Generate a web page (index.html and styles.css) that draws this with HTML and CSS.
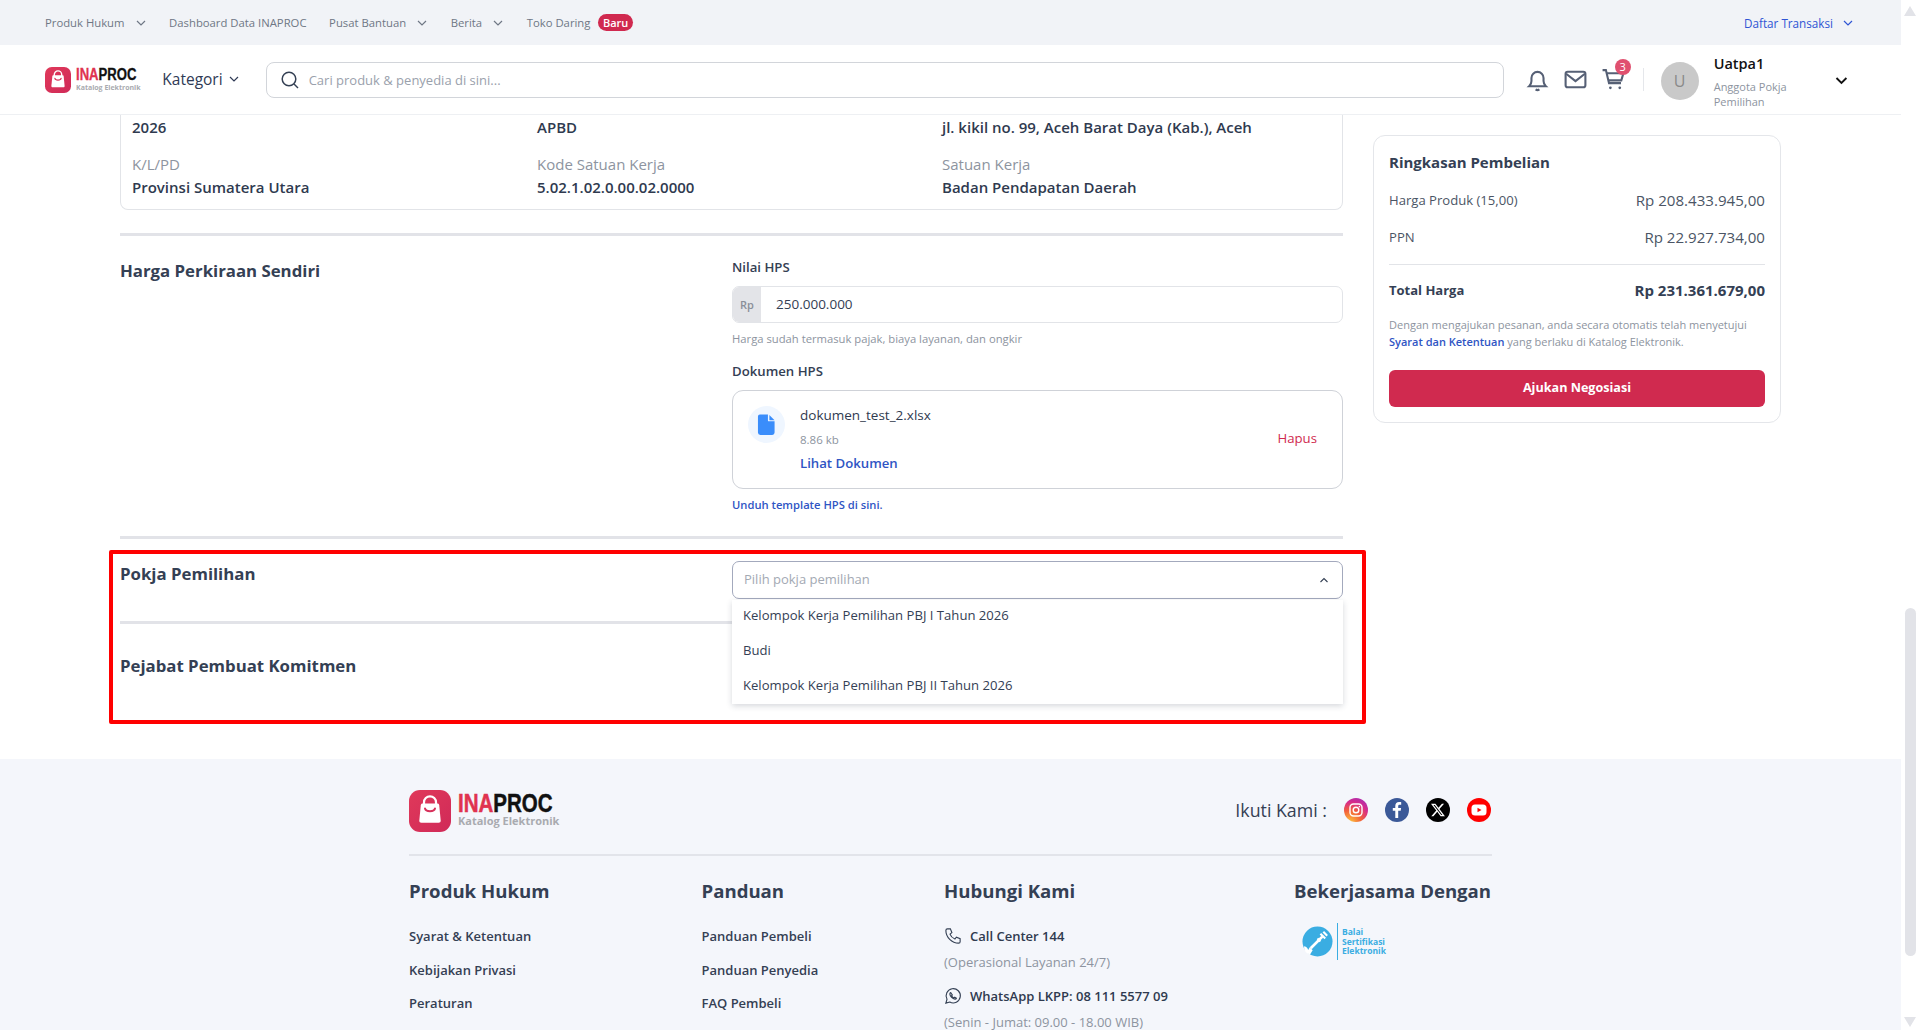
FILE: index.html
```html
<!DOCTYPE html>
<html lang="id">
<head>
    <meta charset="UTF-8">
    <title>Katalog Elektronik</title>
    <link rel="stylesheet" href="styles.css">
</head>
<body>
<svg class="defs" width="0" height="0">
    <defs>
        <linearGradient id="bagBg" x1="0" y1="0" x2="1" y2="1">
            <stop offset="0" stop-color="#e0395a"/>
            <stop offset="1" stop-color="#d02a58"/>
        </linearGradient>
        <radialGradient id="igBg" cx="0.25" cy="1" r="1.2">
            <stop offset="0" stop-color="#fdc13c"/>
            <stop offset="0.4" stop-color="#f2613a"/>
            <stop offset="0.7" stop-color="#d62a8c"/>
            <stop offset="1" stop-color="#9a2fc0"/>
        </radialGradient>
        <symbol id="bag" viewBox="0 0 42 42">
            <rect width="42" height="42" rx="11" fill="url(#bagBg)"/>
            <path d="M15 14.5v-2.2a6 6 0 0 1 12 0v2.2" fill="none" stroke="#fff" stroke-width="2.2"/>
            <path d="M13.6 13.5h14.8c1 0 1.700.7 1.800 1.700l1.500 15.300c.1 1.300-.8 2.300-2 2.300H12.300c-1.200 0-2.100-1-2-2.300l1.500-15.300c.1-1 .8-1.700 1.800-1.700z" fill="#fff"/>
            <path d="M16 18.500c.8 3.600 9.200 3.600 10 0" fill="none" stroke="#d8305a" stroke-width="2" stroke-linecap="round"/>
        </symbol>
    </defs>
</svg>

<div class="window">
    <div class="page">
        <div class="topbar">
            <nav class="topbar-links">
                <a class="top-link has-caret">Produk Hukum <svg class="caret" viewBox="0 0 12 12"><path d="M2 4l4 4 4-4"/></svg></a>
                <a class="top-link">Dashboard Data INAPROC</a>
                <a class="top-link has-caret">Pusat Bantuan <svg class="caret" viewBox="0 0 12 12"><path d="M2 4l4 4 4-4"/></svg></a>
                <a class="top-link has-caret">Berita <svg class="caret" viewBox="0 0 12 12"><path d="M2 4l4 4 4-4"/></svg></a>
                <a class="top-link">Toko Daring <span class="badge-new">Baru</span></a>
            </nav>
            <a class="top-link transaksi">Daftar Transaksi <svg class="caret" viewBox="0 0 12 12"><path d="M2 4l4 4 4-4"/></svg></a>
        </div>

        <header class="header">
            <div class="logo logo-small">
                <svg class="logo-icon"><use href="#bag"/></svg>
                <div class="logo-text">
                    <div class="logo-name"><span class="logo-red">INA</span>PROC</div>
                    <div class="logo-sub">Katalog Elektronik</div>
                </div>
            </div>
            <button class="kategori">Kategori <svg class="caret" viewBox="0 0 12 12"><path d="M2 4l4 4 4-4"/></svg></button>
            <div class="search">
                <svg class="search-icon" viewBox="0 0 20 20"><circle cx="9" cy="9" r="6.800"/><path d="M14 14L18 18"/></svg>
                <span>Cari produk &amp; penyedia di sini...</span>
            </div>
            <div class="header-icons">
                <svg class="h-icon" viewBox="0 0 24 24"><path d="M4 18.500h16c-1.400-1.300-2.200-2.800-2.200-5v-3a5.800 5.800 0 0 0-11.600 0v3c0 2.200-.8 3.700-2.200 5z"/><path d="M10.200 21.500c.9.700 2.700.7 3.600 0"/></svg>
                <svg class="h-icon" viewBox="0 0 24 24"><rect x="2.500" y="4.500" width="19" height="15" rx="2"/><path d="M3 6.500l9 7 9-7"/></svg>
                <div class="cart">
                    <svg class="h-icon" viewBox="0 0 24 24"><path d="M1.500 3h3.200l3 12.500h11.500"/><path d="M5.400 6h16.100l-2 6.800H7"/><circle cx="9" cy="20" r="1.300" class="dot"/><circle cx="18" cy="20" r="1.300" class="dot"/></svg>
                    <span class="cart-count">3</span>
                </div>
            </div>
            <div class="header-sep"></div>
            <div class="avatar">U</div>
            <div class="user">
                <div class="user-name">Uatpa1</div>
                <div class="user-role">Anggota Pokja Pemilihan</div>
            </div>
            <svg class="user-caret" viewBox="0 0 12 12"><path d="M2 4l4 4 4-4"/></svg>
        </header>

        <main class="content">
            <div class="form-col">
                <div class="info-card">
                    <div class="info-value first">2026</div>
                    <div class="info-value first">APBD</div>
                    <div class="info-value first">jl. kikil no. 99, Aceh Barat Daya (Kab.), Aceh</div>
                    <div class="info-cell">
                        <div class="info-label">K/L/PD</div>
                        <div class="info-value">Provinsi Sumatera Utara</div>
                    </div>
                    <div class="info-cell">
                        <div class="info-label">Kode Satuan Kerja</div>
                        <div class="info-value">5.02.1.02.0.00.02.0000</div>
                    </div>
                    <div class="info-cell">
                        <div class="info-label">Satuan Kerja</div>
                        <div class="info-value">Badan Pendapatan Daerah</div>
                    </div>
                </div>

                <div class="section-line first-line"></div>

                <section class="form-section hps">
                    <h2 class="section-title">Harga Perkiraan Sendiri</h2>
                    <div class="field">
                        <div class="field-label">Nilai HPS</div>
                        <div class="money-input">
                            <span class="money-addon">Rp</span>
                            <span class="money-value">250.000.000</span>
                        </div>
                        <div class="field-help">Harga sudah termasuk pajak, biaya layanan, dan ongkir</div>
                        <div class="field-label doc-label">Dokumen HPS</div>
                        <div class="file-box">
                            <div class="file-icon">
                                <svg viewBox="0 0 20 24" width="19" height="23"><path d="M3 1.500h8.500v6.200c0 .6.400 1 1 1H18.500V20.500a2.500 2.500 0 0 1-2.500 2.500H3.500A2.500 2.500 0 0 1 1 20.500V3.500a2 2 0 0 1 2-2z" fill="#3a8dfb"/><path d="M13 2l5.500 5.500H13z" fill="#3a8dfb"/></svg>
                            </div>
                            <div class="file-info">
                                <div class="file-name">dokumen_test_2.xlsx</div>
                                <div class="file-size">8.86 kb</div>
                                <a class="file-view">Lihat Dokumen</a>
                            </div>
                            <a class="file-remove">Hapus</a>
                        </div>
                        <a class="template-link">Unduh template HPS di sini.</a>
                    </div>
                </section>

                <div class="section-line"></div>

                <section class="form-section pokja">
                    <h2 class="section-title">Pokja Pemilihan</h2>
                    <div class="select-wrap">
                        <div class="select-box">
                            <span>Pilih pokja pemilihan</span>
                            <svg class="select-caret" viewBox="0 0 12 12"><path d="M2.500 8l3.500-3.500 3.500 3.500"/></svg>
                        </div>
                        <ul class="select-menu">
                            <li>Kelompok Kerja Pemilihan PBJ I Tahun 2026</li>
                            <li>Budi</li>
                            <li>Kelompok Kerja Pemilihan PBJ II Tahun 2026</li>
                        </ul>
                    </div>
                </section>

                <div class="section-line"></div>

                <section class="form-section ppk">
                    <h2 class="section-title">Pejabat Pembuat Komitmen</h2>
                </section>
            </div>

            <aside class="summary">
                <h3 class="summary-title">Ringkasan Pembelian</h3>
                <div class="summary-row row-first"><span>Harga Produk (15,00)</span><b>Rp 208.433.945,00</b></div>
                <div class="summary-row row-second"><span>PPN</span><b>Rp 22.927.734,00</b></div>
                <div class="summary-line"></div>
                <div class="summary-row summary-total"><span>Total Harga</span><b>Rp 231.361.679,00</b></div>
                <p class="summary-note">Dengan mengajukan pesanan, anda secara otomatis telah menyetujui <a>Syarat dan Ketentuan</a> yang berlaku di Katalog Elektronik.</p>
                <button class="btn-submit">Ajukan Negosiasi</button>
            </aside>
        </main>

        <footer class="footer">
            <div class="footer-inner">
                <div class="footer-top">
                    <div class="logo logo-big">
                        <svg class="logo-icon"><use href="#bag"/></svg>
                        <div class="logo-text">
                            <div class="logo-name"><span class="logo-red">INA</span>PROC</div>
                            <div class="logo-sub">Katalog Elektronik</div>
                        </div>
                    </div>
                    <div class="social">
                        <span class="social-label">Ikuti Kami :</span>
                        <svg class="social-icon" viewBox="0 0 24 24"><circle cx="12" cy="12" r="12" fill="url(#igBg)"/><rect x="6" y="6" width="12" height="12" rx="3.500" fill="none" stroke="#fff" stroke-width="1.400"/><circle cx="12" cy="12" r="2.800" fill="none" stroke="#fff" stroke-width="1.400"/><circle cx="15.400" cy="8.600" r=".8" fill="#fff"/></svg>
                        <svg class="social-icon" viewBox="0 0 24 24"><circle cx="12" cy="12" r="12" fill="#3b5998"/><path d="M13.200 20v-7.200h2.500l.4-2.900h-2.900V8.200c0-.8.300-1.400 1.500-1.400h1.500V4.200c-.3 0-1.200-.1-2.200-.1-2.200 0-3.700 1.300-3.700 3.800v2H7.800v2.900h2.500V20z" fill="#fff"/></svg>
                        <svg class="social-icon" viewBox="0 0 24 24"><circle cx="12" cy="12" r="12" fill="#000"/><g transform="translate(5 5) scale(.58)"><path d="M18.901 1.153h3.680l-8.040 9.190L24 22.846h-7.406l-5.800-7.584-6.638 7.584H.474l8.600-9.830L0 1.154h7.594l5.243 6.932ZM17.610 20.644h2.039L6.486 3.240H4.298Z" fill="#fff"/></g></svg>
                        <svg class="social-icon" viewBox="0 0 24 24"><circle cx="12" cy="12" r="12" fill="#f00"/><rect x="4.500" y="6.500" width="15" height="11" rx="3.500" fill="#fff"/><path d="M10.500 9.700l4 2.300-4 2.300z" fill="#f00"/></svg>
                    </div>
                </div>
                <div class="footer-line"></div>
                <div class="footer-cols">
                    <div class="footer-col">
                        <h4>Produk Hukum</h4>
                        <a>Syarat &amp; Ketentuan</a>
                        <a>Kebijakan Privasi</a>
                        <a>Peraturan</a>
                    </div>
                    <div class="footer-col">
                        <h4>Panduan</h4>
                        <a>Panduan Pembeli</a>
                        <a>Panduan Penyedia</a>
                        <a>FAQ Pembeli</a>
                    </div>
                    <div class="footer-col contact">
                        <h4>Hubungi Kami</h4>
                        <div class="contact-row">
                            <svg viewBox="0 0 24 24"><path d="M4.500 2.500h4l2 5-2.500 2c1 2.800 3.300 5.300 6.500 6.500l2-2.500 5 2v4c0 1-1 2-2 2C10.500 21.500 2.500 13.500 2.500 4.500c0-1 1-2 2-2z"/></svg>
                            <span>Call Center 144</span>
                        </div>
                        <div class="contact-note">(Operasional Layanan 24/7)</div>
                        <div class="contact-row wa">
                            <svg viewBox="0 0 24 24"><path d="M2.500 21.500l1.500-5.200a9.500 9.500 0 1 1 3.700 3.700z"/><path d="M9 7.500c-.8.300-1.300 1.100-1.200 2 .3 3 3.700 6.400 6.700 6.700.9.100 1.700-.4 2-1.200l-2.200-1.300-1 .9c-1.200-.5-2.600-1.900-3.100-3.100l.9-1z"/></svg>
                            <span>WhatsApp LKPP: 08 111 5577 09</span>
                        </div>
                        <div class="contact-note">(Senin - Jumat: 09.00 - 18.00 WIB)</div>
                    </div>
                    <div class="footer-col partner">
                        <h4>Bekerjasama Dengan</h4>
                        <div class="bsre">
                            <svg viewBox="0 0 32 32" width="31" height="31"><circle cx="16" cy="16" r="15.500" fill="#3aade2"/><path d="M9 23l12-12" stroke="#fff" stroke-width="2.800" fill="none"/><path d="M19 8l5 5M22 6l4 4M16 13l3 3" stroke="#fff" stroke-width="2.200" fill="none"/><path d="M2 21c3 0 5 3 5 8-3-1-5-4-5-8zM8 22l3 3-3 5-3-3z" fill="#fff"/></svg>
                            <div class="bsre-text">Balai<br>Sertifikasi<br>Elektronik</div>
                        </div>
                    </div>
                </div>
            </div>
        </footer>

        <div class="highlight"></div>
    </div>

    <div class="scrollbar">
        <div class="arrow-up"></div>
        <div class="thumb"></div>
        <div class="arrow-down"></div>
    </div>
</div>
</body>
</html>
```

FILE: styles.css
```css
* {
    box-sizing: border-box;
}

body {
    margin: 0;
    background: #fff;
    color: #344054;
    font-family: "Open Sans", sans-serif;
    overflow: hidden;
}

a {
    text-decoration: none;
}

.defs {
    position: absolute;
}

.window {
    display: flex;
    height: 1030px;
}

.page {
    position: relative;
    width: 1901px;
    height: 1030px;
    overflow: hidden;
    display: flex;
    flex-direction: column;
}

/* top strip */
.topbar {
    height: 45px;
    flex: none;
    background: #f1f3f7;
    display: flex;
    align-items: center;
    justify-content: space-between;
    padding: 0 47px 0 45px;
}

.topbar-links {
    display: flex;
    align-items: center;
    gap: 22.600px;
}

.top-link {
    display: flex;
    align-items: center;
    font-size: 11.300px;
    color: #6f7785;
    gap: 8px;
}

.has-caret {
    gap: 10px;
}

.caret {
    width: 12px;
    height: 12px;
    fill: none;
    stroke: currentColor;
    stroke-width: 1.2;
}

.badge-new {
    background: #d0294f;
    color: #fff;
    font-size: 11px;
    font-weight: 600;
    line-height: 17px;
    height: 17px;
    padding: 0 4.500px;
    border-radius: 9px;
}

.transaksi {
    color: #2f55d4;
    font-size: 11.700px;
    font-weight: 500;
    gap: 9px;
    margin-top: 1px;
}

/* main header */
.header {
    height: 70px;
    flex: none;
    display: flex;
    align-items: center;
    border-bottom: 1px solid #eef0f3;
    padding: 0 52px 0 45px;
}

.logo {
    display: flex;
}

.logo-small {
    width: 118px;
    gap: 5px;
    align-items: center;
}

.logo-small .logo-icon {
    width: 26px;
    height: 26px;
}

.logo-name {
    font-family: "Liberation Sans", sans-serif;
    font-weight: 700;
    color: #111;
    transform-origin: left center;
    white-space: nowrap;
}

.logo-red {
    color: #e0334f;
}

.logo-sub {
    font-weight: 700;
    color: #a9abb0;
    white-space: nowrap;
}

.logo-small .logo-name {
    font-size: 16px;
    line-height: 14px;
    transform: scaleX(.82);
    -webkit-text-stroke: .3px;
}

.logo-small .logo-sub {
    font-size: 7px;
    line-height: 9px;
    margin-top: 1px;
}

.logo-big {
    gap: 7px;
    align-items: center;
}

.logo-big .logo-icon {
    width: 42px;
    height: 42px;
}

.logo-big .logo-text {
    margin-top: -2px;
}

.logo-big .logo-name {
    font-size: 25px;
    line-height: 22px;
    transform: scaleX(.82);
    -webkit-text-stroke: .5px;
}

.logo-big .logo-sub {
    font-size: 11px;
    line-height: 12px;
    margin-top: 1px;
}

.kategori {
    display: flex;
    align-items: center;
    gap: 5px;
    background: none;
    border: 0;
    padding: 0 0 2px;
    width: 104px;
    font-family: inherit;
    font-size: 15.500px;
    font-weight: 500;
    color: #2f3a55;
}

.search {
    width: 1238px;
    height: 36px;
    flex: none;
    display: flex;
    align-items: center;
    gap: 9px;
    padding: 0 13px;
    border: 1px solid #d2d5da;
    border-radius: 8px;
    font-size: 13px;
    color: #9aa1ac;
}

.search-icon {
    width: 20px;
    height: 20px;
    fill: none;
    stroke: #344054;
    stroke-width: 1.500;
}

.header-icons {
    display: flex;
    align-items: center;
    gap: 13px;
    margin-left: 21px;
}

.h-icon {
    width: 25px;
    height: 25px;
    fill: none;
    stroke: #566075;
    stroke-width: 2;
    display: block;
}

.h-icon .dot {
    fill: #566075;
    stroke: none;
}

.cart {
    position: relative;
}

.cart-count {
    position: absolute;
    top: -8px;
    right: -5px;
    width: 16px;
    height: 16px;
    border-radius: 50%;
    background: #e0506f;
    color: #fff;
    font-size: 11px;
    line-height: 16px;
    text-align: center;
}

.header-sep {
    width: 1px;
    height: 23px;
    background: #e5e7eb;
    margin: 0 17px 0 17px;
}

.avatar {
    width: 38px;
    height: 38px;
    flex: none;
    margin-top: 2px;
    border-radius: 50%;
    background: #c9c9c9;
    color: #8a8a8a;
    font-size: 16px;
    font-weight: 500;
    line-height: 38px;
    text-align: center;
}

.user {
    width: 98px;
    margin-left: 15px;
    margin-top: 4px;
}

.user-name {
    font-size: 14.500px;
    font-weight: 600;
    line-height: 20px;
    color: #111;
    margin-bottom: 5px;
}

.user-role {
    font-size: 11px;
    line-height: 15px;
    color: #8d94a0;
}

.user-caret {
    width: 15px;
    height: 15px;
    margin-left: 23px;
    margin-top: 2px;
    fill: none;
    stroke: #111;
    stroke-width: 1.500;
}

/* content */
.content {
    height: 644px;
    flex: none;
    display: flex;
    gap: 30px;
    padding-left: 120px;
}

.form-col {
    width: 1223px;
    flex: none;
}

.info-card {
    height: 95px;
    display: grid;
    grid-template-columns: 405px 405px 1fr;
    grid-template-rows: 22px 1fr;
    padding: 2px 11px 0;
    border: 1px solid #e2e4e8;
    border-top: 0;
    border-radius: 0 0 8px 8px;
}

.info-cell {
    padding-top: 15px;
}

.info-label {
    font-size: 15px;
    line-height: 20px;
    color: #8d94a0;
    margin-bottom: 3px;
}

.info-value {
    font-size: 15px;
    font-weight: 600;
    line-height: 20px;
    color: #2f3a4f;
}

.section-line {
    height: 3px;
    background: #e2e3e8;
}

.first-line {
    margin-top: 23px;
}

.form-section {
    display: grid;
    grid-template-columns: 612px 1fr;
    align-items: start;
}

.section-title {
    margin: 0;
    font-size: 16.800px;
    font-weight: 700;
    line-height: 22px;
    color: #344054;
}

.hps {
    padding: 22px 0 23px;
}

.hps .section-title {
    margin-top: 2px;
}

.field-label {
    font-size: 13.200px;
    font-weight: 600;
    line-height: 18px;
    color: #344054;
}

.money-input {
    display: flex;
    align-items: center;
    height: 37px;
    margin-top: 10px;
    border: 1px solid #e2e4e8;
    border-radius: 7px;
    overflow: hidden;
    font-size: 13.500px;
}

.money-addon {
    width: 28px;
    height: 100%;
    background: #e3e4e8;
    color: #8a8f98;
    font-size: 11px;
    font-weight: 600;
    line-height: 35px;
    text-align: center;
}

.money-value {
    padding-left: 15px;
    margin-top: -1px;
    color: #344054;
}

.field-help {
    margin-top: 8px;
    font-size: 11.250px;
    line-height: 16px;
    color: #8d94a0;
}

.doc-label {
    margin-top: 15px;
}

.file-box {
    height: 99px;
    margin-top: 10px;
    display: flex;
    align-items: flex-start;
    padding: 15px 25px 0 15px;
    border: 1px solid #cfd2d8;
    border-radius: 11px;
}

.file-icon {
    width: 37px;
    height: 37px;
    flex: none;
    display: flex;
    align-items: center;
    justify-content: center;
    border-radius: 50%;
    background: #eff6ff;
}

.file-info {
    margin-left: 15px;
    flex: 1;
}

.file-name {
    font-size: 13.500px;
    font-weight: 500;
    line-height: 18px;
    color: #2f3a4f;
}

.file-size {
    margin-top: 9px;
    font-size: 11.500px;
    line-height: 14px;
    color: #8d94a0;
}

.file-view {
    display: block;
    margin-top: 7px;
    font-size: 13.200px;
    font-weight: 600;
    line-height: 18px;
    color: #2f55c4;
}

.file-remove {
    margin-top: 23px;
    font-size: 13.200px;
    font-weight: 500;
    line-height: 18px;
    color: #d0294f;
}

.template-link {
    display: block;
    margin-top: 8px;
    font-size: 11.200px;
    font-weight: 600;
    line-height: 16px;
    color: #2f55c4;
}

.pokja {
    padding: 22px 0;
}

.pokja .section-title {
    margin-top: 2px;
}

.select-wrap {
    position: relative;
}

.select-box {
    height: 38px;
    display: flex;
    align-items: center;
    justify-content: space-between;
    padding: 0 12px 2px 11px;
    border: 1px solid #a3a9bd;
    border-radius: 7px;
    font-size: 13px;
    color: #a3a9b3;
}

.select-caret {
    width: 12px;
    height: 12px;
    margin-top: 2px;
    fill: none;
    stroke: #344054;
    stroke-width: 1.100;
}

.select-menu {
    position: absolute;
    top: 39px;
    left: 0;
    right: 0;
    z-index: 2;
    margin: 0;
    padding: 0;
    height: 104px;
    list-style: none;
    background: #fff;
    box-shadow: 0 2px 6px rgba(30, 40, 60, .18);
    font-size: 13.100px;
    color: #344054;
}

.select-menu li {
    height: 35px;
    padding-left: 11px;
    line-height: 31px;
}

.ppk {
    padding-top: 31px;
}

/* summary card */
.summary {
    width: 408px;
    height: 288px;
    flex: none;
    margin-top: 20px;
    padding: 16px 15px 0;
    border: 1px solid #e4e6ea;
    border-radius: 12px;
}

.summary-title {
    margin: 0;
    font-size: 15px;
    font-weight: 700;
    line-height: 20px;
    color: #344054;
}

.summary-row {
    display: flex;
    align-items: center;
    justify-content: space-between;
    height: 20px;
    font-size: 13.100px;
    color: #4b5565;
}

.summary-row b {
    font-size: 15.100px;
    font-weight: 400;
}

.row-first {
    margin-top: 18px;
}

.row-second {
    margin-top: 17px;
}

.summary-line {
    height: 1px;
    margin-top: 17px;
    background: #e2e4e8;
}

.summary-total {
    margin-top: 15px;
    font-size: 13px;
    color: #344054;
    font-weight: 700;
}

.summary-total b {
    font-size: 15px;
    font-weight: 700;
}

.summary-note {
    margin: 16px 0 0;
    font-size: 11px;
    line-height: 17px;
    color: #8d94a0;
}

.summary-note a {
    font-weight: 600;
    color: #2f55c4;
}

.btn-submit {
    display: block;
    width: 100%;
    height: 37px;
    margin-top: 20px;
    padding-bottom: 3px;
    border: 0;
    border-radius: 6px;
    background: #d02a4f;
    color: #fff;
    font-family: inherit;
    font-size: 12.600px;
    font-weight: 700;
}

/* footer */
.footer {
    flex: 1;
    background: #f4f6fb;
    padding-left: 409px;
    overflow: hidden;
}

.footer-inner {
    width: 1083px;
    padding-top: 31px;
}

.footer-top {
    height: 41px;
    display: flex;
    align-items: center;
    justify-content: space-between;
}

.social {
    display: flex;
    align-items: center;
    gap: 17px;
    margin: -2px 1px 0 0;
}

.social-label {
    font-size: 17.800px;
    color: #344054;
}

.social-icon {
    width: 24px;
    height: 24px;
    display: block;
}

.footer-line {
    height: 2px;
    margin-top: 23px;
    background: #e2e4ea;
}

.footer-cols {
    display: grid;
    grid-template-columns: 292.500px 242.500px 350px 1fr;
    margin-top: 22px;
}

.footer-col h4 {
    margin: 0 0 22px;
    font-size: 18.600px;
    font-weight: 700;
    line-height: 26px;
    color: #344054;
    white-space: nowrap;
}

.footer-col a {
    display: block;
    margin-bottom: 13.500px;
    font-size: 13px;
    font-weight: 600;
    line-height: 20px;
    color: #344054;
}

.contact-row {
    display: flex;
    align-items: center;
    gap: 8px;
    height: 20px;
    font-size: 13px;
    font-weight: 600;
    color: #2f3a4f;
}

.contact-row svg {
    width: 18px;
    height: 18px;
    fill: none;
    stroke: #344054;
    stroke-width: 1.500;
}

.contact-note {
    margin-top: 6px;
    font-size: 13px;
    line-height: 20px;
    color: #8d94a0;
}

.wa {
    margin-top: 14px;
}

.bsre {
    display: flex;
    align-items: center;
    margin: -3px 0 0 8px;
    height: 37px;
}

.bsre-text {
    margin-left: 4px;
    padding: 4px 0 4px 4px;
    border-left: 1px solid #3aade2;
    font-size: 8.500px;
    font-weight: 700;
    line-height: 9.500px;
    color: #3aade2;
}

/* review mark drawn over the page */
.highlight {
    position: absolute;
    top: 550px;
    left: 109px;
    width: 1257px;
    height: 174px;
    z-index: 3;
    border: 4px solid #f00;
    border-radius: 2px;
    pointer-events: none;
}

/* scrollbar */
.scrollbar {
    width: 18px;
    flex: none;
    background: #fff;
    display: flex;
    flex-direction: column;
    align-items: center;
}

.arrow-up {
    margin-top: 6px;
    border-left: 6.500px solid transparent;
    border-right: 6.500px solid transparent;
    border-bottom: 10px solid #e2e3e8;
}

.thumb {
    width: 11px;
    height: 348px;
    margin-top: 592px;
    border-radius: 6px;
    background: #e2e3e8;
}

.arrow-down {
    margin-top: 61px;
    border-left: 6.500px solid transparent;
    border-right: 6.500px solid transparent;
    border-top: 10px solid #e2e3e8;
}
```
